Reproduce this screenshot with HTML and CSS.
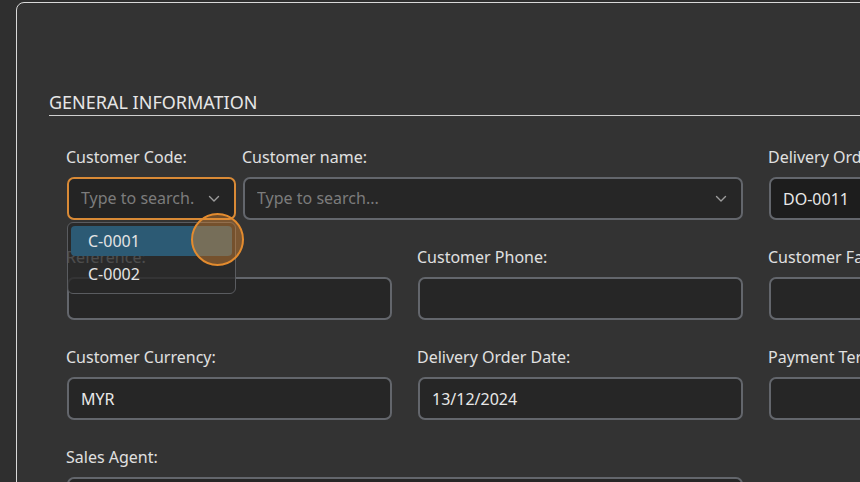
FILE: index.html
```html
<!DOCTYPE html>
<html>
<head>
<meta charset="utf-8">
<link rel="stylesheet" href="styles.css">
</head>
<body>
<div class="card">
  <h2 class="section-title">GENERAL INFORMATION</h2>
  <div class="form">
    <div class="pair">
      <div class="field code">
        <label class="label">Customer Code:</label>
        <div class="combo">
          <div class="input focused">
            <span class="placeholder">Type to search.</span>
            <svg class="chev" width="12" height="8" viewBox="0 0 12 8"><path d="M1.5 1.5 L6 6 L10.5 1.5" fill="none" stroke="#9c9c9c" stroke-width="1.4" stroke-linecap="round" stroke-linejoin="round"/></svg>
          </div>
          <div class="dropdown">
            <div class="option active">C-0001</div>
            <div class="option">C-0002</div>
          </div>
        </div>
      </div>
      <div class="field name">
        <label class="label">Customer name:</label>
        <div class="input">
          <span class="placeholder">Type to search...</span>
          <svg class="chev" width="12" height="8" viewBox="0 0 12 8"><path d="M1.5 1.5 L6 6 L10.5 1.5" fill="none" stroke="#9c9c9c" stroke-width="1.4" stroke-linecap="round" stroke-linejoin="round"/></svg>
        </div>
      </div>
    </div>
    <div class="field">
      <label class="label">Delivery Order No:</label>
      <div class="input readonly"><span class="value">DO-0011</span></div>
    </div>

    <div class="field under">
      <label class="label">Reference:</label>
      <div class="input"></div>
    </div>
    <div class="field">
      <label class="label">Customer Phone:</label>
      <div class="input"></div>
    </div>
    <div class="field">
      <label class="label">Customer Fax:</label>
      <div class="input"></div>
    </div>

    <div class="field">
      <label class="label">Customer Currency:</label>
      <div class="input"><span class="value">MYR</span></div>
    </div>
    <div class="field">
      <label class="label">Delivery Order Date:</label>
      <div class="input"><span class="value">13/12/2024</span></div>
    </div>
    <div class="field">
      <label class="label">Payment Terms:</label>
      <div class="input"></div>
    </div>

    <div class="field span2">
      <label class="label">Sales Agent:</label>
      <div class="input"></div>
    </div>
  </div>
</div>
<div class="click-ring"></div>
</body>
</html>
```

FILE: styles.css
```css
html, body {
  margin: 0;
  padding: 0;
}
body {
  background: #2f2f2f;
  height: 482px;
  overflow: hidden;
  font-family: "Noto Sans", "Open Sans", sans-serif;
  color: #e2e2e2;
  position: relative;
}
.card {
  margin: 2px 0 0 16px;
  width: 1200px;
  min-height: 700px;
  box-sizing: border-box;
  border: 1px solid #d9d9d9;
  border-radius: 8px;
  background: #333333;
  padding: 87px 0 0 32px;
}
.section-title {
  margin: 0;
  font-size: 18px;
  font-weight: 400;
  line-height: 24px;
  color: #e6e6e6;
  padding-bottom: 1px;
  border-bottom: 1px solid #cfcfcf;
}
.form {
  margin-top: 31px;
  padding-left: 18px;
  display: grid;
  grid-template-columns: 325px 325px 325px;
  column-gap: 26px;
  row-gap: 27px;
}
.pair {
  grid-column: span 2;
  display: flex;
  gap: 7px;
}
.field {
  display: flex;
  flex-direction: column;
}
.field.code {
  width: 169px;
  flex: none;
}
.field.name {
  flex: 1;
}
.field.span2 {
  grid-column: span 2;
}
.label {
  font-size: 16px;
  line-height: 20px;
  margin-bottom: 10px;
  color: #e0e0e0;
  margin-left: -1px;
  white-space: nowrap;
}
.combo {
  position: relative;
}
.input {
  height: 43px;
  box-sizing: border-box;
  border: 2px solid #63666c;
  border-radius: 7px;
  background: #262626;
  display: flex;
  align-items: center;
  padding: 0 14px 0 12px;
  font-size: 16px;
  overflow: hidden;
  white-space: nowrap;
}
.input.focused {
  border-color: #d98a36;
  background: #242424;
}
.input.readonly {
  background: #1d1d1d;
}
.placeholder {
  color: #7c7c7c;
  flex: 1;
  overflow: hidden;
  margin-top: -1px;
}
.value {
  color: #e8e8e8;
}
.chev {
  flex: none;
  margin-left: 6px;
}
.dropdown {
  position: absolute;
  top: calc(100% + 2px);
  left: 0;
  right: 0;
  z-index: 5;
  box-sizing: border-box;
  border: 1px solid #5a5c60;
  border-radius: 6px;
  background: rgba(40, 40, 40, 0.8);
  padding: 3px;
}
.option {
  height: 32px;
  line-height: 32px;
  padding-left: 17px;
  font-size: 16px;
  color: #e4e4e4;
  border-radius: 4px;
}
.option.active {
  background: #2c5a74;
  height: 30px;
  line-height: 30px;
  margin-bottom: 2px;
}
.click-ring {
  position: absolute;
  left: 191px;
  top: 213px;
  width: 53px;
  height: 53px;
  box-sizing: border-box;
  border: 2px solid #e38b2e;
  border-radius: 50%;
  background: rgba(230, 140, 50, 0.4);
  z-index: 10;
}
```
